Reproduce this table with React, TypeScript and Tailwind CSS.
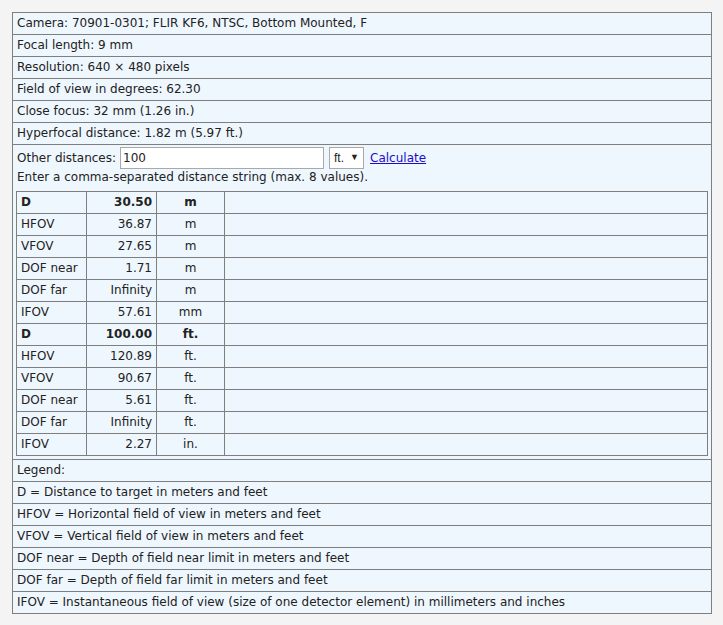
import React from "react";

const font = { fontFamily: '"DejaVu Sans", Verdana, sans-serif' };

const topRows = [
  "Camera: 70901-0301; FLIR KF6, NTSC, Bottom Mounted, F",
  "Focal length: 9 mm",
  "Resolution: 640 \u00d7 480 pixels",
  "Field of view in degrees: 62.30",
  "Close focus: 32 mm (1.26 in.)",
  "Hyperfocal distance: 1.82 m (5.97 ft.)",
];

type R = [string, string, string, boolean?];
const data: R[] = [
  ["D", "30.50", "m", true],
  ["HFOV", "36.87", "m"],
  ["VFOV", "27.65", "m"],
  ["DOF near", "1.71", "m"],
  ["DOF far", "Infinity", "m"],
  ["IFOV", "57.61", "mm"],
  ["D", "100.00", "ft.", true],
  ["HFOV", "120.89", "ft."],
  ["VFOV", "90.67", "ft."],
  ["DOF near", "5.61", "ft."],
  ["DOF far", "Infinity", "ft."],
  ["IFOV", "2.27", "in."],
];

const legend = [
  "Legend:",
  "D = Distance to target in meters and feet",
  "HFOV = Horizontal field of view in meters and feet",
  "VFOV = Vertical field of view in meters and feet",
  "DOF near = Depth of field near limit in meters and feet",
  "DOF far = Depth of field far limit in meters and feet",
  "IFOV = Instantaneous field of view (size of one detector element) in millimeters and inches",
];

const cell = "border border-[#7f7f7f] px-[4px] h-[22px] leading-[15px] align-middle";

export default function App() {
  return (
    <div className="min-h-[625px] bg-[#f4f4f4] p-[12px] text-[12px] text-[#222]" style={font}>
      <table className="w-[700px] border-collapse bg-[#eff7fe]">
        <tbody>
          {topRows.map((t) => (
            <tr key={t}>
              <td className={cell}>{t}</td>
            </tr>
          ))}
          <tr>
            <td className="border border-[#7f7f7f] px-[3px] pt-[2px] pb-[3px] align-top">
              <div className="flex items-center h-[22px] pl-[1px]">
                <span>Other distances:</span>
                <input
                  defaultValue="100"
                  className="ml-[4px] w-[204px] h-[22px] bg-white border border-[#a9a9a9] px-[2px] text-[12px] text-[#222] outline-none"
                  style={font}
                />
                <div className="ml-[5px] w-[35px] h-[22px] bg-white border border-[#a9a9a9] flex items-center justify-between px-[4px] text-[12px]" style={{ fontFamily: '"Liberation Sans", Arial, sans-serif' }}>
                  <span>ft.</span>
                  <span className="text-[9px]">▼</span>
                </div>
                <a className="ml-[6px] text-[#1a0dcc] underline cursor-pointer">Calculate</a>
              </div>
              <div className="pl-[1px] leading-[15px] mt-[1px]">Enter a comma-separated distance string (max. 8 values).</div>
              <table className="mt-[6px] w-[692px] border-collapse">
                <tbody>
                  {data.map(([a, b, c, bold], i) => (
                    <tr key={i} className={bold ? "font-bold" : ""}>
                      <td className={`${cell} w-[70px]`}>{a}</td>
                      <td className={`${cell} w-[70px] text-right`}>{b}</td>
                      <td className={`${cell} w-[68px] text-center`}>{c}</td>
                      <td className={cell}></td>
                    </tr>
                  ))}
                </tbody>
              </table>
            </td>
          </tr>
          {legend.map((t) => (
            <tr key={t}>
              <td className={cell}>{t}</td>
            </tr>
          ))}
        </tbody>
      </table>
    </div>
  );
}
